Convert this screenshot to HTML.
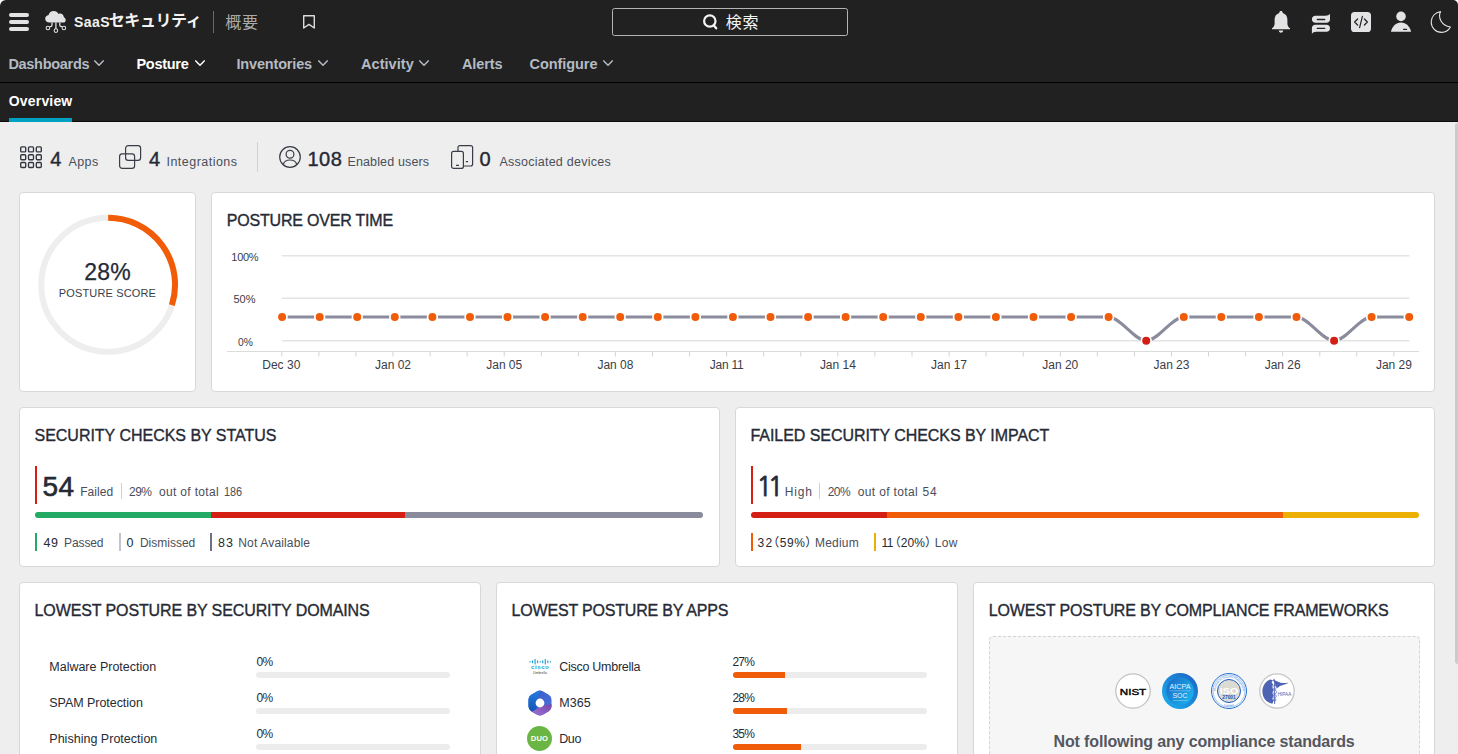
<!DOCTYPE html>
<html lang="ja"><head><meta charset="utf-8"><title>SaaSセキュリティ - 概要</title>
<style>
*{box-sizing:border-box;margin:0;padding:0}
html,body{width:1458px;height:754px;overflow:hidden;background:#fff}
body{font-family:"Liberation Sans","Noto Sans CJK JP",sans-serif;color:#262a35}
#app{position:relative;width:1458px;height:754px;overflow:hidden;background:#eeeeee;border-radius:6px 5px 0 0}
.t{position:absolute;white-space:nowrap;line-height:1;display:block}
.abs{position:absolute}
h2{font-weight:400;margin:0}
header{position:absolute;left:0;top:0;width:1458px;height:122px;background:#212121}
.card{position:absolute;background:#fff;border:1px solid #d8d8d8;border-radius:4px}
svg{position:absolute;overflow:visible}
.bar{position:absolute;height:6px;border-radius:3px;background:#ececec;overflow:hidden}
.bar i{position:absolute;left:0;top:0;height:6px;display:block}
.vb{position:absolute;width:2px}
</style></head>
<body><div id="app">
<header><button class="abs" aria-label="menu" style="left:9px;top:13px;width:20px;height:18px;background:none;border:0"><i class="abs" style="left:0;top:0;width:20px;height:4px;border-radius:2px;background:#e3e3e6"></i><i class="abs" style="left:0;top:7px;width:20px;height:4px;border-radius:2px;background:#e3e3e6"></i><i class="abs" style="left:0;top:14px;width:20px;height:4px;border-radius:2px;background:#e3e3e6"></i></button>
<svg style="left:44px;top:10px" width="24" height="24" viewBox="0 0 24 24">
<path d="M5.6 12.6 C3 12.6 1.2 10.9 1.2 8.7 C1.2 6.7 2.7 5.2 4.6 5 C5.2 2.6 7.2 1 9.7 1 C11.8 1 13.6 2.1 14.5 3.9 C15 3.7 15.5 3.6 16.1 3.6 C18.1 3.6 19.7 5.2 19.9 7.3 C21 7.8 21.7 8.9 21.7 10.2 C21.7 11.6 20.6 12.6 19.1 12.6 Z" fill="#e3e3e6"/>
<path d="M8 12.5 V15 Q8 16.6 6.4 16.6 H5.6 M11.9 12.5 V19 M15.8 12.5 V15 Q15.8 16.6 17.4 16.6 H18.2" fill="none" stroke="#e3e3e6" stroke-width="1.3"/>
<circle cx="3.9" cy="18" r="1.8" fill="none" stroke="#e3e3e6" stroke-width="1.05"/>
<circle cx="11.9" cy="20.6" r="1.8" fill="none" stroke="#e3e3e6" stroke-width="1.05"/>
<circle cx="19.9" cy="18" r="1.8" fill="none" stroke="#e3e3e6" stroke-width="1.05"/>
</svg>
<span class="t" style="left:74.10px;top:15.00px;font-size:14px;font-weight:700;letter-spacing:0.433px;color:#f2f2f2;">SaaS</span>
<span class="t" style="left:108.80px;top:12.50px;font-size:16px;font-weight:700;letter-spacing:-0.440px;color:#f2f2f2;">セキュリティ</span>
<i class="abs" style="left:213px;top:11px;width:1px;height:22px;background:#6a6a6a"></i>
<span class="t" style="left:225.30px;top:14.50px;font-size:16px;letter-spacing:0.600px;color:#a9a9a9;">概要</span>
<svg style="left:302px;top:14px" width="14" height="16" viewBox="0 0 14 16"><path d="M1.7 1.7 H12.3 V14 L7 10.4 L1.7 14 Z" fill="none" stroke="#dcdcdc" stroke-width="1.4" stroke-linejoin="round"/></svg>
<div class="abs" role="search" style="left:612px;top:8px;width:236px;height:28px;border:1px solid #b4b4b4;border-radius:2.5px"><svg style="left:88px;top:4px" width="20" height="20" viewBox="0 0 20 20"><circle cx="8.8" cy="8" r="5.7" fill="none" stroke="#f4f4f4" stroke-width="2.2"/><path d="M12.9 12.6 L15.2 15.3" stroke="#f4f4f4" stroke-width="2.3" stroke-linecap="round"/></svg><span class="t" style="left:112.70px;top:5.50px;font-size:16px;letter-spacing:0.800px;color:#f4f4f4;">検索</span></div>
<svg style="left:1270px;top:10px" width="22" height="24" viewBox="0 0 22 24">
<path d="M11 0.9 C12 0.9 12.7 1.6 12.7 2.5 V3 C15.6 3.8 17.4 6.3 17.4 9.6 V13.4 C17.4 15.5 18.4 17 20 18.3 V19.3 H2 V18.3 C3.6 17 4.6 15.5 4.6 13.4 V9.6 C4.6 6.3 6.4 3.8 9.3 3 V2.5 C9.3 1.6 10 0.9 11 0.9 Z" fill="#e3e3e6"/>
<path d="M8.8 20.6 H13.2 C13.2 21.9 12.2 22.8 11 22.8 C9.8 22.8 8.8 21.9 8.8 20.6 Z" fill="#e3e3e6"/></svg>
<svg style="left:1310px;top:12px" width="22" height="24" viewBox="0 0 22 24">
<path d="M5.4 3.8 H15.5 C17.6 3.8 19.3 3 20 1.8 V7.6 C20 9.5 18.5 10.8 16.6 10.8 H5.4 C3.4 10.8 1.9 9.3 1.9 7.3 C1.9 5.3 3.4 3.8 5.4 3.8 Z" fill="#e3e3e6"/>
<path d="M16.6 12.8 H5.3 C3.4 12.8 1.9 14.1 1.9 16 V22 C2.6 20.7 4.3 19.8 6.4 19.8 H16.6 C18.6 19.8 20 18.3 20 16.3 C20 14.3 18.6 12.8 16.6 12.8 Z" fill="#e3e3e6"/>
<path d="M7.3 7.5 H14.7 M7.3 16.4 H14.7" stroke="#212121" stroke-width="1.3" stroke-linecap="round"/></svg>
<svg style="left:1351px;top:12px" width="20" height="20" viewBox="0 0 20 20">
<rect x="0" y="0" width="20" height="20" rx="3.6" fill="#e3e3e6"/>
<path d="M6.6 7 L3.6 10 L6.6 13 M13.4 7 L16.4 10 L13.4 13 M11.4 4.4 L8.6 15.6" fill="none" stroke="#212121" stroke-width="1.2" stroke-linecap="round" stroke-linejoin="round"/></svg>
<svg style="left:1390px;top:10px" width="22" height="24" viewBox="0 0 22 24">
<circle cx="11" cy="6.4" r="4.8" fill="#e3e3e6"/>
<path d="M0.9 21.8 C2.2 16 6 12.4 11 12.4 C16 12.4 19.8 16 21.1 21.8 Z" fill="#e3e3e6"/>
<path d="M13.6 19.4 H16.6" stroke="#212121" stroke-width="1.2" stroke-linecap="round"/></svg>
<svg style="left:1429px;top:10px" width="24" height="24" viewBox="0 0 24 24">
<path d="M11.6 1.6 C8.6 7.6 12.4 15.6 21.4 17 C19.6 20.4 16.4 22.4 12.6 22.4 C6.8 22.4 2.2 17.8 2.2 12 C2.2 6.6 6.2 2.2 11.6 1.6 Z" fill="none" stroke="#e3e3e6" stroke-width="1.1" stroke-linejoin="round"/></svg><nav class="abs" style="left:0;top:42px;width:1458px;height:41px;border-bottom:1px solid #000"><a class="abs" style="left:0;top:0"><span class="t" style="left:8.40px;top:14.75px;font-size:14.5px;font-weight:700;letter-spacing:-0.289px;color:#b4bbc3;">Dashboards</span></a><svg style="left:94.2px;top:18.2px" width="10" height="7" viewBox="0 0 10 7"><path d="M0.8 0.9 L5 5.3 L9.2 0.9" fill="none" stroke="#b4bbc3" stroke-width="1.5" stroke-linecap="round" stroke-linejoin="round"/></svg>
<a class="abs" style="left:0;top:0"><span class="t" style="left:136.40px;top:14.75px;font-size:14.5px;font-weight:700;letter-spacing:-0.267px;color:#ffffff;">Posture</span></a><svg style="left:194.6px;top:18.2px" width="10" height="7" viewBox="0 0 10 7"><path d="M0.8 0.9 L5 5.3 L9.2 0.9" fill="none" stroke="#ffffff" stroke-width="1.5" stroke-linecap="round" stroke-linejoin="round"/></svg>
<a class="abs" style="left:0;top:0"><span class="t" style="left:236.50px;top:14.75px;font-size:14.5px;font-weight:700;letter-spacing:-0.170px;color:#b4bbc3;">Inventories</span></a><svg style="left:317.6px;top:18.2px" width="10" height="7" viewBox="0 0 10 7"><path d="M0.8 0.9 L5 5.3 L9.2 0.9" fill="none" stroke="#b4bbc3" stroke-width="1.5" stroke-linecap="round" stroke-linejoin="round"/></svg>
<a class="abs" style="left:0;top:0"><span class="t" style="left:361.00px;top:14.75px;font-size:14.5px;font-weight:700;letter-spacing:0.057px;color:#b4bbc3;">Activity</span></a><svg style="left:419.2px;top:18.2px" width="10" height="7" viewBox="0 0 10 7"><path d="M0.8 0.9 L5 5.3 L9.2 0.9" fill="none" stroke="#b4bbc3" stroke-width="1.5" stroke-linecap="round" stroke-linejoin="round"/></svg>
<a class="abs" style="left:0;top:0"><span class="t" style="left:462.00px;top:14.75px;font-size:14.5px;font-weight:700;letter-spacing:-0.120px;color:#b4bbc3;">Alerts</span></a>
<a class="abs" style="left:0;top:0"><span class="t" style="left:529.50px;top:14.75px;font-size:14.5px;font-weight:700;letter-spacing:-0.062px;color:#b4bbc3;">Configure</span></a><svg style="left:602.8px;top:18.2px" width="10" height="7" viewBox="0 0 10 7"><path d="M0.8 0.9 L5 5.3 L9.2 0.9" fill="none" stroke="#b4bbc3" stroke-width="1.5" stroke-linecap="round" stroke-linejoin="round"/></svg></nav><div class="abs" style="left:0;top:83px;width:1458px;height:39px;border-bottom:1px solid #0c0c0c"><span class="t" style="left:8.80px;top:11.00px;font-size:14px;font-weight:700;letter-spacing:0.171px;color:#ffffff;">Overview</span><i class="abs" style="left:9px;top:35px;width:63px;height:4px;background:#00a0c0"></i></div></header>
<main>
<section class="abs" style="left:0;top:0"><svg style="left:20px;top:146px" width="23" height="23" viewBox="0 0 23 23" fill="none" stroke="#33363f" stroke-width="1.35"><rect x="0.7" y="0.9" width="5" height="5" rx="1"/><rect x="8.5" y="0.9" width="5" height="5" rx="1"/><rect x="16.3" y="0.9" width="5" height="5" rx="1"/><rect x="0.7" y="8.7" width="5" height="5" rx="1"/><rect x="8.5" y="8.7" width="5" height="5" rx="1"/><rect x="16.3" y="8.7" width="5" height="5" rx="1"/><rect x="0.7" y="16.5" width="5" height="5" rx="1"/><rect x="8.5" y="16.5" width="5" height="5" rx="1"/><rect x="16.3" y="16.5" width="5" height="5" rx="1"/></svg>
<span class="t" style="left:50.20px;top:149.00px;font-size:20px;color:#262a35;-webkit-text-stroke:0.4px #262a35;">4</span>
<span class="t" style="left:68.40px;top:155.75px;font-size:12.5px;letter-spacing:0.467px;color:#4a4e5a;">Apps</span>
<svg style="left:119px;top:145px" width="23" height="24" viewBox="0 0 23 24" fill="none" stroke="#3a3d47" stroke-width="1.2"><rect x="6.6" y="0.6" width="15" height="14.8" rx="2.6"/><rect x="0.6" y="8.8" width="15" height="14.6" rx="2.6"/></svg>
<span class="t" style="left:149.00px;top:149.00px;font-size:20px;color:#262a35;-webkit-text-stroke:0.4px #262a35;">4</span>
<span class="t" style="left:166.50px;top:155.75px;font-size:12.5px;letter-spacing:0.473px;color:#4a4e5a;">Integrations</span>
<i class="abs" style="left:257px;top:142px;width:1px;height:30px;background:#d2d2d2"></i>
<svg style="left:279px;top:146px" width="22" height="22" viewBox="0 0 22 22" fill="none" stroke="#3a3d47" stroke-width="1.2"><circle cx="11" cy="11" r="10.3"/><circle cx="11" cy="8.3" r="3.9"/><path d="M4.2 18.6 C5 15.6 7.6 14 11 14 C14.4 14 17 15.6 17.8 18.6"/></svg>
<span class="t" style="left:307.40px;top:149.00px;font-size:20px;letter-spacing:0.600px;color:#262a35;-webkit-text-stroke:0.4px #262a35;">108</span>
<span class="t" style="left:347.40px;top:155.75px;font-size:12.5px;letter-spacing:0.150px;color:#4a4e5a;">Enabled users</span>
<svg style="left:451px;top:145px" width="23" height="24" viewBox="0 0 23 24" fill="none" stroke="#3a3d47" stroke-width="1.2"><path d="M7 6.4 V2.6 Q7 0.6 9 0.6 H19.6 Q21.6 0.6 21.6 2.6 V19 Q21.6 21 19.6 21 H12.4"/><rect x="0.6" y="6.4" width="11.8" height="17" rx="2"/><path d="M5 20.4 H8 M14.8 16.6 H17" stroke-width="1.3"/></svg>
<span class="t" style="left:479.40px;top:149.00px;font-size:20px;color:#262a35;-webkit-text-stroke:0.4px #262a35;">0</span>
<span class="t" style="left:499.40px;top:155.75px;font-size:12.5px;letter-spacing:0.253px;color:#4a4e5a;">Associated devices</span></section>
<section class="card" style="left:19px;top:192px;width:177px;height:200px"><svg style="left:0;top:0" width="175" height="197" viewBox="0 0 175 197"><circle cx="88.15" cy="91.75" r="66.9" fill="none" stroke="#eeeeee" stroke-width="6"/><path d="M88.15 24.85 A66.9 66.9 0 0 1 151.87 112.14" fill="none" stroke="#f15c08" stroke-width="6"/></svg><span class="t" style="left:64.20px;top:67.50px;font-size:23px;letter-spacing:0.250px;color:#262a35;-webkit-text-stroke:0.25px #262a35;">28%</span><span class="t" style="left:38.80px;top:94.50px;font-size:11px;letter-spacing:0.150px;color:#3a3d47;">POSTURE SCORE</span></section>
<section class="card" style="left:211px;top:192px;width:1224px;height:200px"><svg style="left:0;top:0" width="1222" height="197" viewBox="212 193 1222 197"><path d="M282 255.8 H1409.4" stroke="#e4e4e4" stroke-width="1.4"/><path d="M282 298.3 H1409.4" stroke="#e4e4e4" stroke-width="1.4"/><path d="M282 340.8 H1409.4" stroke="#e4e4e4" stroke-width="1.4"/><path d="M227 351.5 H1419" stroke="#dcdcdc" stroke-width="1"/><path d="M281.8 351.5 V356.5" stroke="#d4d4d4" stroke-width="1"/><path d="M318.9 351.5 V356.5" stroke="#d4d4d4" stroke-width="1"/><path d="M355.9 351.5 V356.5" stroke="#d4d4d4" stroke-width="1"/><path d="M393.0 351.5 V356.5" stroke="#d4d4d4" stroke-width="1"/><path d="M430.1 351.5 V356.5" stroke="#d4d4d4" stroke-width="1"/><path d="M467.1 351.5 V356.5" stroke="#d4d4d4" stroke-width="1"/><path d="M504.2 351.5 V356.5" stroke="#d4d4d4" stroke-width="1"/><path d="M541.3 351.5 V356.5" stroke="#d4d4d4" stroke-width="1"/><path d="M578.4 351.5 V356.5" stroke="#d4d4d4" stroke-width="1"/><path d="M615.4 351.5 V356.5" stroke="#d4d4d4" stroke-width="1"/><path d="M652.5 351.5 V356.5" stroke="#d4d4d4" stroke-width="1"/><path d="M689.6 351.5 V356.5" stroke="#d4d4d4" stroke-width="1"/><path d="M726.6 351.5 V356.5" stroke="#d4d4d4" stroke-width="1"/><path d="M763.7 351.5 V356.5" stroke="#d4d4d4" stroke-width="1"/><path d="M800.8 351.5 V356.5" stroke="#d4d4d4" stroke-width="1"/><path d="M837.8 351.5 V356.5" stroke="#d4d4d4" stroke-width="1"/><path d="M874.9 351.5 V356.5" stroke="#d4d4d4" stroke-width="1"/><path d="M912.0 351.5 V356.5" stroke="#d4d4d4" stroke-width="1"/><path d="M949.1 351.5 V356.5" stroke="#d4d4d4" stroke-width="1"/><path d="M986.1 351.5 V356.5" stroke="#d4d4d4" stroke-width="1"/><path d="M1023.2 351.5 V356.5" stroke="#d4d4d4" stroke-width="1"/><path d="M1060.3 351.5 V356.5" stroke="#d4d4d4" stroke-width="1"/><path d="M1097.3 351.5 V356.5" stroke="#d4d4d4" stroke-width="1"/><path d="M1134.4 351.5 V356.5" stroke="#d4d4d4" stroke-width="1"/><path d="M1171.5 351.5 V356.5" stroke="#d4d4d4" stroke-width="1"/><path d="M1208.5 351.5 V356.5" stroke="#d4d4d4" stroke-width="1"/><path d="M1245.6 351.5 V356.5" stroke="#d4d4d4" stroke-width="1"/><path d="M1282.7 351.5 V356.5" stroke="#d4d4d4" stroke-width="1"/><path d="M1319.8 351.5 V356.5" stroke="#d4d4d4" stroke-width="1"/><path d="M1356.8 351.5 V356.5" stroke="#d4d4d4" stroke-width="1"/><path d="M1393.9 351.5 V356.5" stroke="#d4d4d4" stroke-width="1"/><path d="M282.1 317.0 L319.7 317.0 L357.2 317.0 L394.8 317.0 L432.4 317.0 L470.0 317.0 L507.5 317.0 L545.1 317.0 L582.7 317.0 L620.2 317.0 L657.8 317.0 L695.4 317.0 L732.9 317.0 L770.5 317.0 L808.1 317.0 L845.6 317.0 L883.2 317.0 L920.8 317.0 L958.4 317.0 L995.9 317.0 L1033.5 317.0 L1071.1 317.0 L1108.6 317.0 C1120.7 317.0 1134.2 340.8 1146.2 340.8 C1158.2 340.8 1171.8 317.0 1183.8 317.0 L1221.3 317.0 L1258.9 317.0 L1296.5 317.0 C1308.5 317.0 1322.0 340.8 1334.1 340.8 C1346.1 340.8 1359.6 317.0 1371.6 317.0 L1409.2 317.0" fill="none" stroke="#8a8b9c" stroke-width="3" stroke-linejoin="round"/><circle cx="282.1" cy="317.0" r="4.85" fill="#f15c08" stroke="#fff" stroke-width="1.7"/><circle cx="319.7" cy="317.0" r="4.85" fill="#f15c08" stroke="#fff" stroke-width="1.7"/><circle cx="357.2" cy="317.0" r="4.85" fill="#f15c08" stroke="#fff" stroke-width="1.7"/><circle cx="394.8" cy="317.0" r="4.85" fill="#f15c08" stroke="#fff" stroke-width="1.7"/><circle cx="432.4" cy="317.0" r="4.85" fill="#f15c08" stroke="#fff" stroke-width="1.7"/><circle cx="470.0" cy="317.0" r="4.85" fill="#f15c08" stroke="#fff" stroke-width="1.7"/><circle cx="507.5" cy="317.0" r="4.85" fill="#f15c08" stroke="#fff" stroke-width="1.7"/><circle cx="545.1" cy="317.0" r="4.85" fill="#f15c08" stroke="#fff" stroke-width="1.7"/><circle cx="582.7" cy="317.0" r="4.85" fill="#f15c08" stroke="#fff" stroke-width="1.7"/><circle cx="620.2" cy="317.0" r="4.85" fill="#f15c08" stroke="#fff" stroke-width="1.7"/><circle cx="657.8" cy="317.0" r="4.85" fill="#f15c08" stroke="#fff" stroke-width="1.7"/><circle cx="695.4" cy="317.0" r="4.85" fill="#f15c08" stroke="#fff" stroke-width="1.7"/><circle cx="732.9" cy="317.0" r="4.85" fill="#f15c08" stroke="#fff" stroke-width="1.7"/><circle cx="770.5" cy="317.0" r="4.85" fill="#f15c08" stroke="#fff" stroke-width="1.7"/><circle cx="808.1" cy="317.0" r="4.85" fill="#f15c08" stroke="#fff" stroke-width="1.7"/><circle cx="845.6" cy="317.0" r="4.85" fill="#f15c08" stroke="#fff" stroke-width="1.7"/><circle cx="883.2" cy="317.0" r="4.85" fill="#f15c08" stroke="#fff" stroke-width="1.7"/><circle cx="920.8" cy="317.0" r="4.85" fill="#f15c08" stroke="#fff" stroke-width="1.7"/><circle cx="958.4" cy="317.0" r="4.85" fill="#f15c08" stroke="#fff" stroke-width="1.7"/><circle cx="995.9" cy="317.0" r="4.85" fill="#f15c08" stroke="#fff" stroke-width="1.7"/><circle cx="1033.5" cy="317.0" r="4.85" fill="#f15c08" stroke="#fff" stroke-width="1.7"/><circle cx="1071.1" cy="317.0" r="4.85" fill="#f15c08" stroke="#fff" stroke-width="1.7"/><circle cx="1108.6" cy="317.0" r="4.85" fill="#f15c08" stroke="#fff" stroke-width="1.7"/><circle cx="1146.2" cy="340.8" r="4.85" fill="#d41f15" stroke="#fff" stroke-width="1.7"/><circle cx="1183.8" cy="317.0" r="4.85" fill="#f15c08" stroke="#fff" stroke-width="1.7"/><circle cx="1221.3" cy="317.0" r="4.85" fill="#f15c08" stroke="#fff" stroke-width="1.7"/><circle cx="1258.9" cy="317.0" r="4.85" fill="#f15c08" stroke="#fff" stroke-width="1.7"/><circle cx="1296.5" cy="317.0" r="4.85" fill="#f15c08" stroke="#fff" stroke-width="1.7"/><circle cx="1334.1" cy="340.8" r="4.85" fill="#d41f15" stroke="#fff" stroke-width="1.7"/><circle cx="1371.6" cy="317.0" r="4.85" fill="#f15c08" stroke="#fff" stroke-width="1.7"/><circle cx="1409.2" cy="317.0" r="4.85" fill="#f15c08" stroke="#fff" stroke-width="1.7"/></svg><h2 class="t" style="left:14.80px;top:19.50px;font-size:16px;letter-spacing:-0.200px;color:#262a35;-webkit-text-stroke:0.35px #262a35;">POSTURE OVER TIME</h2><span class="t" style="left:19.30px;top:58.50px;font-size:11px;letter-spacing:-0.267px;color:#3a3d47;">100%</span><span class="t" style="left:21.40px;top:100.50px;font-size:11px;letter-spacing:0.100px;color:#3a3d47;">50%</span><span class="t" style="left:25.60px;top:143.50px;font-size:11px;transform:scaleX(0.9375);transform-origin:0 0;color:#3a3d47;">0%</span><span class="t" style="left:50.20px;top:166.00px;font-size:12px;letter-spacing:0.040px;color:#3a3d47;">Dec 30</span><span class="t" style="left:163.06px;top:166.00px;font-size:12px;letter-spacing:-0.020px;color:#3a3d47;">Jan 02</span><span class="t" style="left:274.27px;top:166.00px;font-size:12px;letter-spacing:-0.020px;color:#3a3d47;">Jan 05</span><span class="t" style="left:385.48px;top:166.00px;font-size:12px;letter-spacing:-0.020px;color:#3a3d47;">Jan 08</span><span class="t" style="left:497.84px;top:166.00px;font-size:12px;letter-spacing:-0.280px;color:#3a3d47;">Jan 11</span><span class="t" style="left:607.90px;top:166.00px;font-size:12px;letter-spacing:-0.020px;color:#3a3d47;">Jan 14</span><span class="t" style="left:719.11px;top:166.00px;font-size:12px;letter-spacing:-0.020px;color:#3a3d47;">Jan 17</span><span class="t" style="left:830.32px;top:166.00px;font-size:12px;letter-spacing:-0.020px;color:#3a3d47;">Jan 20</span><span class="t" style="left:941.53px;top:166.00px;font-size:12px;letter-spacing:-0.020px;color:#3a3d47;">Jan 23</span><span class="t" style="left:1052.74px;top:166.00px;font-size:12px;letter-spacing:-0.020px;color:#3a3d47;">Jan 26</span><span class="t" style="left:1163.95px;top:166.00px;font-size:12px;letter-spacing:-0.020px;color:#3a3d47;">Jan 29</span></section>
<section class="card" style="left:19px;top:407px;width:701px;height:160px"><h2 class="t" style="left:14.50px;top:19.50px;font-size:16px;letter-spacing:-0.017px;color:#262a35;-webkit-text-stroke:0.35px #262a35;">SECURITY CHECKS BY STATUS</h2><i class="vb" style="left:15px;top:58px;height:38px;background:#d41f15"></i><span class="t" style="left:22.50px;top:64.50px;font-size:28px;letter-spacing:0.500px;color:#262a35;-webkit-text-stroke:0.6px #262a35;">54</span><span class="t" style="left:60.20px;top:78.00px;font-size:12px;letter-spacing:0.040px;color:#4a4e5a;">Failed</span><i class="abs" style="left:101px;top:75px;width:1px;height:16px;background:#d0d0d0"></i><span class="t" style="left:109.00px;top:78.00px;font-size:12px;letter-spacing:-0.500px;color:#4a4e5a;">29%</span><span class="t" style="left:139.00px;top:78.00px;font-size:12px;letter-spacing:0.327px;color:#4a4e5a;">out of total</span><span class="t" style="left:203.89px;top:78.00px;font-size:12px;transform:scaleX(0.9053);transform-origin:0 0;color:#4a4e5a;">186</span><div class="bar" style="left:15px;top:104px;width:668px"><i style="left:0px;width:176px;background:#23ab66"></i><i style="left:176px;width:194px;background:#d41f15"></i><i style="left:370px;width:298px;background:#8a8b9c"></i></div><i class="vb" style="left:15px;top:125px;height:18px;background:#23ab66"></i><span class="t" style="left:23.40px;top:128.75px;font-size:12.5px;letter-spacing:0.600px;color:#262a35;">49</span><span class="t" style="left:44.00px;top:129.00px;font-size:12px;letter-spacing:-0.100px;color:#4a4e5a;">Passed</span><i class="vb" style="left:99px;top:125px;height:18px;background:#c4c4c8"></i><span class="t" style="left:106.60px;top:128.75px;font-size:12.5px;color:#262a35;">0</span><span class="t" style="left:119.90px;top:129.00px;font-size:12px;color:#4a4e5a;">Dismissed</span><i class="vb" style="left:190px;top:125px;height:18px;background:#6f7083"></i><span class="t" style="left:197.90px;top:128.75px;font-size:12.5px;letter-spacing:1.200px;color:#262a35;">83</span><span class="t" style="left:218.30px;top:129.00px;font-size:12px;letter-spacing:0.158px;color:#4a4e5a;">Not Available</span></section>
<section class="card" style="left:735px;top:407px;width:700px;height:160px"><h2 class="t" style="left:14.50px;top:19.50px;font-size:16px;letter-spacing:-0.055px;color:#262a35;-webkit-text-stroke:0.35px #262a35;">FAILED SECURITY CHECKS BY IMPACT</h2><i class="vb" style="left:15px;top:58px;height:38px;background:#d41f15"></i><span class="t" style="left:20.50px;top:66.00px;font-size:26px;letter-spacing:-4.400px;color:#262a35;font-family:'NanumGothic', 'Liberation Sans', sans-serif;-webkit-text-stroke:0.8px #262a35;">11</span><span class="t" style="left:48.80px;top:78.00px;font-size:12px;letter-spacing:0.800px;color:#4a4e5a;">High</span><i class="abs" style="left:83px;top:75px;width:1px;height:16px;background:#d0d0d0"></i><span class="t" style="left:91.70px;top:78.00px;font-size:12px;letter-spacing:-0.500px;color:#4a4e5a;">20%</span><span class="t" style="left:121.70px;top:78.00px;font-size:12px;letter-spacing:0.364px;color:#4a4e5a;">out of total</span><span class="t" style="left:186.40px;top:78.00px;font-size:12px;letter-spacing:1.000px;color:#4a4e5a;">54</span><div class="bar" style="left:15px;top:104px;width:668px"><i style="left:0px;width:136px;background:#d41f15"></i><i style="left:136px;width:396px;background:#f15c08"></i><i style="left:532px;width:136px;background:#ecb004"></i></div><i class="vb" style="left:15px;top:125px;height:18px;background:#f15c08"></i><span class="t" style="left:21.40px;top:129.00px;font-size:12px;letter-spacing:1.400px;color:#262a35;">32</span><span class="t" style="left:31.30px;top:129.00px;font-size:12px;letter-spacing:0.500px;color:#262a35;">（59%）</span><span class="t" style="left:79.00px;top:129.00px;font-size:12px;letter-spacing:0.200px;color:#4a4e5a;">Medium</span><i class="vb" style="left:138px;top:125px;height:18px;background:#ecb004"></i><span class="t" style="left:145.40px;top:129.00px;font-size:12px;letter-spacing:-0.500px;color:#262a35;">11</span><span class="t" style="left:152.70px;top:129.00px;font-size:12px;letter-spacing:0.050px;color:#262a35;">（20%）</span><span class="t" style="left:198.70px;top:129.00px;font-size:12px;letter-spacing:0.300px;color:#4a4e5a;">Low</span></section>
<section class="card" style="left:19px;top:582px;width:462px;height:200px"><h2 class="t" style="left:14.50px;top:19.50px;font-size:16px;letter-spacing:-0.106px;color:#262a35;-webkit-text-stroke:0.35px #262a35;">LOWEST POSTURE BY SECURITY DOMAINS</h2><span class="t" style="left:29.30px;top:77.75px;font-size:12.5px;letter-spacing:-0.012px;color:#262a35;">Malware Protection</span><span class="t" style="left:236.50px;top:73.00px;font-size:12px;letter-spacing:-0.700px;color:#262a35;">0%</span><div class="bar" style="left:236px;top:89px;width:194px"></div><span class="t" style="left:29.30px;top:113.75px;font-size:12.5px;letter-spacing:-0.050px;color:#262a35;">SPAM Protection</span><span class="t" style="left:236.50px;top:109.00px;font-size:12px;letter-spacing:-0.700px;color:#262a35;">0%</span><div class="bar" style="left:236px;top:125px;width:194px"></div><span class="t" style="left:29.30px;top:149.75px;font-size:12.5px;letter-spacing:0.017px;color:#262a35;">Phishing Protection</span><span class="t" style="left:236.50px;top:145.00px;font-size:12px;letter-spacing:-0.700px;color:#262a35;">0%</span><div class="bar" style="left:236px;top:161px;width:194px"></div></section>
<section class="card" style="left:496px;top:582px;width:462px;height:200px"><h2 class="t" style="left:14.50px;top:19.50px;font-size:16px;letter-spacing:-0.181px;color:#262a35;-webkit-text-stroke:0.35px #262a35;">LOWEST POSTURE BY APPS</h2><span class="t" style="left:62.20px;top:77.75px;font-size:12.5px;letter-spacing:-0.262px;color:#262a35;">Cisco Umbrella</span><span class="t" style="left:235.40px;top:73.00px;font-size:12px;letter-spacing:-0.700px;color:#262a35;">27%</span><div class="bar" style="left:236px;top:89px;width:194px"><i style="width:52.4px;background:#f15c08"></i></div><span class="t" style="left:62.20px;top:113.75px;font-size:12.5px;letter-spacing:0.067px;color:#262a35;">M365</span><span class="t" style="left:235.40px;top:109.00px;font-size:12px;letter-spacing:-0.700px;color:#262a35;">28%</span><div class="bar" style="left:236px;top:125px;width:194px"><i style="width:54.3px;background:#f15c08"></i></div><span class="t" style="left:62.20px;top:149.75px;font-size:12.5px;letter-spacing:-0.350px;color:#262a35;">Duo</span><span class="t" style="left:235.40px;top:145.00px;font-size:12px;letter-spacing:-0.700px;color:#262a35;">35%</span><div class="bar" style="left:236px;top:161px;width:194px"><i style="width:67.9px;background:#f15c08"></i></div><svg style="left:31.5px;top:73px" width="22" height="22" viewBox="0 0 22 22"><g fill="#1ba0d7"><rect x="0.4" y="5.05" width="1.15" height="1.5" rx="0.55"/><rect x="2.95" y="4.35" width="1.15" height="2.9" rx="0.55"/><rect x="5.5" y="3.05" width="1.15" height="5.5" rx="0.55"/><rect x="8.05" y="4.35" width="1.15" height="2.9" rx="0.55"/><rect x="10.6" y="5.05" width="1.15" height="1.5" rx="0.55"/><rect x="13.15" y="4.35" width="1.15" height="2.9" rx="0.55"/><rect x="15.7" y="3.05" width="1.15" height="5.5" rx="0.55"/><rect x="18.25" y="4.35" width="1.15" height="2.9" rx="0.55"/><rect x="20.8" y="5.05" width="1.15" height="1.5" rx="0.55"/></g><text x="11.2" y="13.4" text-anchor="middle" font-family="Liberation Sans, sans-serif" font-weight="700" font-size="6.1" fill="#1ba0d7" letter-spacing="0.55">cisco</text><text x="11" y="17.6" text-anchor="middle" font-family="Liberation Sans, sans-serif" font-size="3.5" fill="#444">Umbrella</text></svg><svg style="left:30.8px;top:106.6px" width="24" height="26" viewBox="0 0 24 26">
<defs><clipPath id="mh"><path d="M9.23 1.30 Q12.00 -0.30 14.77 1.30 L20.75 4.75 Q23.52 6.35 23.52 9.55 L23.52 16.45 Q23.52 19.65 20.75 21.25 L14.77 24.70 Q12.00 26.30 9.23 24.70 L3.25 21.25 Q0.48 19.65 0.48 16.45 L0.48 9.55 Q0.48 6.35 3.25 4.75 Z"/></clipPath>
<linearGradient id="m1" x1="0" y1="0" x2="0" y2="1"><stop offset="0" stop-color="#2680e6"/><stop offset="1" stop-color="#0c4aa8"/></linearGradient>
<linearGradient id="m2" x1="0" y1="0" x2="1" y2="1"><stop offset="0" stop-color="#3457c4"/><stop offset="1" stop-color="#4f74e0"/></linearGradient>
<linearGradient id="m3" x1="1" y1="0" x2="0" y2="1"><stop offset="0" stop-color="#7446a8"/><stop offset="1" stop-color="#a474d8"/></linearGradient></defs>
<g clip-path="url(#mh)"><rect width="24" height="26" fill="url(#m2)"/>
<path d="M12.6 -1 H-1 V27 H8 L8.4 21.6 L9 9 Z" fill="url(#m1)"/>
<path d="M25 14.2 L14.6 15.4 L4.2 21.6 L6 27 H25 Z" fill="url(#m3)"/></g>
<circle cx="12" cy="13" r="4.4" fill="#fff"/>
</svg><svg style="left:30px;top:143.4px" width="25" height="25" viewBox="0 0 25 25"><circle cx="12.5" cy="12.5" r="12.5" fill="#6bb544"/><text x="12.5" y="15.3" text-anchor="middle" font-family="Liberation Sans, sans-serif" font-weight="700" font-size="7.6" fill="#fff" letter-spacing="0.2">DUO</text></svg></section>
<section class="card" style="left:973px;top:582px;width:462px;height:200px"><h2 class="t" style="left:14.80px;top:19.50px;font-size:16px;letter-spacing:-0.153px;color:#262a35;-webkit-text-stroke:0.35px #262a35;">LOWEST POSTURE BY COMPLIANCE FRAMEWORKS</h2><div class="abs" style="left:15px;top:53px;width:431px;height:150px;background:#f6f6f6;border:1px dashed #d4d4d4;border-radius:4px"><svg style="left:124.5px;top:35.8px" width="36" height="36" viewBox="0 0 36 36"><circle cx="18" cy="18" r="17.2" fill="#fff" stroke="#c4c4c4" stroke-width="1.3"/><text x="18" y="21.5" text-anchor="middle" font-family="Liberation Sans, sans-serif" font-size="9.4" fill="#0a0a0a" stroke="#0a0a0a" stroke-width="0.45" textLength="26.4" lengthAdjust="spacingAndGlyphs">NIST</text></svg><svg style="left:172.4px;top:35.8px" width="36" height="36" viewBox="0 0 36 36"><defs><linearGradient id="a1" x1="0" y1="1" x2="1" y2="0"><stop offset="0" stop-color="#18b0ee"/><stop offset="0.45" stop-color="#1d8edc"/><stop offset="1" stop-color="#1c5fc0"/></linearGradient><linearGradient id="a2" x1="0" y1="0" x2="1" y2="0.6"><stop offset="0" stop-color="#1c66c4"/><stop offset="1" stop-color="#19aeec"/></linearGradient></defs><circle cx="18" cy="18" r="18" fill="url(#a1)"/><circle cx="18" cy="18" r="13.8" fill="url(#a2)"/><text x="18" y="16" text-anchor="middle" font-family="Liberation Sans, sans-serif" font-size="7.7" fill="#e6f3fc" textLength="21" lengthAdjust="spacingAndGlyphs">AICPA</text><path d="M7.6 17.8 H28.6" stroke="#bfe0f6" stroke-width="0.4"/><text x="18" y="24.8" text-anchor="middle" font-family="Liberation Sans, sans-serif" font-size="7.7" fill="#e6f3fc" textLength="15" lengthAdjust="spacingAndGlyphs">SOC</text><text x="18" y="28.4" text-anchor="middle" font-family="Liberation Sans, sans-serif" font-size="1.9" fill="#d6ecfa">aicpa.org/soc4so</text></svg><svg style="left:220.5px;top:35.8px" width="36" height="36" viewBox="0 0 36 36"><defs><path id="ia" d="M4.6 18 A13.4 13.4 0 0 1 31.4 18"/><path id="ib" d="M2.6 18 A15.4 15.4 0 0 0 33.4 18"/></defs><circle cx="18" cy="18" r="17.5" fill="#fff" stroke="#1f6fd0" stroke-width="1"/><circle cx="18" cy="18" r="16.1" fill="none" stroke="#1f6fd0" stroke-width="0.4"/><text font-family="Liberation Sans, sans-serif" font-size="2.8" fill="#2a78d6"><textPath href="#ia" startOffset="50%" text-anchor="middle">Information Security Management</textPath></text><text font-family="Liberation Sans, sans-serif" font-size="2.8" fill="#2a78d6"><textPath href="#ib" startOffset="50%" text-anchor="middle">Certified</textPath></text><circle cx="18" cy="18" r="11.5" fill="#dcdbd3" stroke="#1c5cc0" stroke-width="1"/><text x="18" y="20.8" text-anchor="middle" font-family="Liberation Sans, sans-serif" font-weight="700" font-size="9.4" fill="#fff" textLength="18.4" lengthAdjust="spacingAndGlyphs">ISO</text><text x="18" y="26.4" text-anchor="middle" font-family="Liberation Sans, sans-serif" font-weight="700" font-size="4.6" fill="#1550b4" textLength="13.4" lengthAdjust="spacingAndGlyphs">27001</text></svg><svg style="left:268.7px;top:35.8px" width="36" height="36" viewBox="0 0 36 36"><circle cx="18" cy="18" r="17.2" fill="#fff" stroke="#c6c6c6" stroke-width="1.3"/><path d="M11.6 6.4 C7 7.6 3.4 12.4 3.4 18.4 C3.4 24.6 7.6 29.8 13.6 30.6 L14.4 28 L13.4 25.4 L14.6 22.6 L13.2 19.8 L14.6 16.8 L12.8 14 L14.2 11.4 L12.6 9.6 L14 7.4 Z" fill="#4f63b4"/><path d="M14 7.2 L15.2 5.6 L16 7.4 C18.4 8 21 9.8 23.6 10 C25.8 10.2 27.6 9.6 29.6 9.8 C27.4 10.6 26.4 11.6 24 12 C21.8 12.4 20 13.4 18.6 15 L16.4 13 L16 10.4 Z" fill="#4f63b4"/><path d="M15.6 7 V31" stroke="#4f63b4" stroke-width="0.9"/><path d="M15.6 12 C18.2 13.2 18.2 15.4 15.6 16.6 C13 17.8 13 20 15.6 21.2 C17.8 22.3 17.8 24.2 15.6 25.2 C13.8 26.1 13.8 27.8 15.6 28.6 M15.6 12 C13 13.2 13 15.4 15.6 16.6 C18.2 17.8 18.2 20 15.6 21.2 C13.4 22.3 13.4 24.2 15.6 25.2 C17.4 26.1 17.4 27.8 15.6 28.6" fill="none" stroke="#5a6ec0" stroke-width="0.8"/><text x="18.7" y="23" font-family="Liberation Sans, sans-serif" font-size="4.7" fill="#4f63b4" textLength="13.6" lengthAdjust="spacingAndGlyphs">HIPAA</text></svg><span class="t" style="left:63.60px;top:96.50px;font-size:16px;font-weight:700;letter-spacing:-0.151px;color:#55575f;">Not following any compliance standards</span></div></section>
</main>
<i class="abs" style="left:1455px;top:123px;width:4px;height:541px;border-radius:3px 0 0 3px;background:#cbcbcb"></i>
</div></body></html>
